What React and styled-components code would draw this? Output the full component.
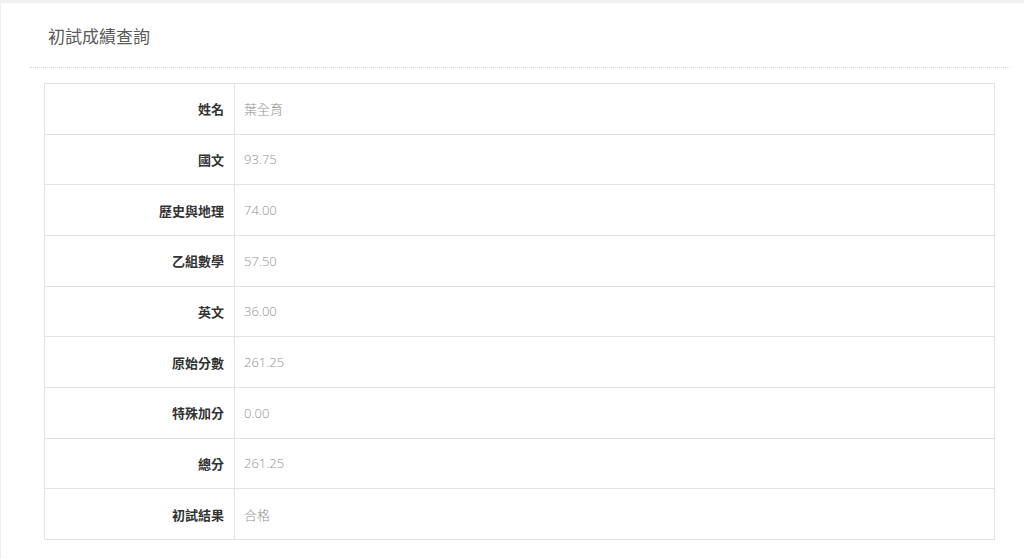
import React from "react";
import styled, { createGlobalStyle } from "styled-components";

const Global = createGlobalStyle`
  html, body { margin: 0; padding: 0; background: #fff; }
  body {
    font-family: "Open Sans", "Noto Sans CJK TC", sans-serif;
    overflow: hidden;
  }
`;

const Page = styled.div`
  width: 1024px;
  height: 559px;
  overflow: hidden;
  border-top: 2px solid #f2f2f2;
  box-sizing: border-box;
`;

const Card = styled.section`
  margin-left: 0;
  width: 1040px;
  box-sizing: border-box;
  border: 1px solid #efefef;
  border-right: none;
  background: #fff;
  padding: 0 30px 0 29px;
  min-height: 600px;
`;

const Header = styled.header`
  height: 65px;
  display: flex;
  align-items: center;
  padding-left: 18px;
  border-bottom: 1px dotted #d6d6d6;
  box-sizing: border-box;
  padding-top: 1px;
`;

const Title = styled.h3`
  margin: 0;
  font-size: 17px;
  font-weight: 400;
  color: #5a5a5a;
  font-family: "Noto Sans CJK TC", sans-serif;
`;

const Body = styled.div`
  padding: 15px 15px 0 14px;
`;

const Table = styled.table`
  width: 100%;
  border-collapse: collapse;
  border: 1px solid #e2e2e2;
`;

const Row = styled.tr`
  height: 50.67px;
`;

const Label = styled.th`
  width: 190px;
  text-align: right;
  font-weight: 700;
  font-size: 13px;
  color: #333;
  padding: 0 10px;
  border: 1px solid #e2e2e2;
  font-family: "Noto Sans CJK TC", sans-serif;
  box-sizing: border-box;
`;

const Value = styled.td`
  text-align: left;
  font-size: 13px;
  font-weight: 300;
  color: #8f8f8f;
  padding: 0 9px;
  border: 1px solid #e2e2e2;
  font-family: "Open Sans", "Noto Sans CJK TC", sans-serif;
`;

const rows = [
  ["姓名", "葉全育"],
  ["國文", "93.75"],
  ["歷史與地理", "74.00"],
  ["乙組數學", "57.50"],
  ["英文", "36.00"],
  ["原始分數", "261.25"],
  ["特殊加分", "0.00"],
  ["總分", "261.25"],
  ["初試結果", "合格"],
];

export default function App() {
  return (
    <Page>
      <Global />
      <Card>
        <Header>
          <Title>初試成績查詢</Title>
        </Header>
        <Body>
          <Table>
            <tbody>
              {rows.map(([k, v]) => (
                <Row key={k}>
                  <Label>{k}</Label>
                  <Value>{v}</Value>
                </Row>
              ))}
            </tbody>
          </Table>
        </Body>
      </Card>
    </Page>
  );
}
